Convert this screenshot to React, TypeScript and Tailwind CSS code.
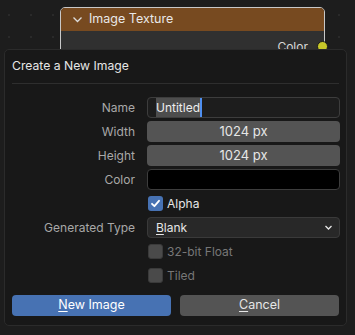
import React from 'react';

const font = { fontFamily: 'Inter, "DejaVu Sans", sans-serif' };

const Check: React.FC<{ on?: boolean; dim?: boolean; label: string }> = ({ on, dim, label }) => (
  <div className="flex items-center h-[21px]">
    <div
      className={`ml-px w-[15px] h-[15px] rounded-[3px] flex items-center justify-center ${
        on ? 'bg-[#4772b3]' : dim ? 'bg-[#4a4a4a] border border-[#3a3a3a]' : 'bg-[#545454]'
      }`}
    >
      {on && (
        <svg width="11" height="11" viewBox="0 0 11 11">
          <path d="M2 5.8 L4.4 8.2 L9 2.8" fill="none" stroke="#ffffff" strokeWidth="1.8" strokeLinecap="round" strokeLinejoin="round" />
        </svg>
      )}
    </div>
    <span className={`ml-[4px] text-[12px] ${dim ? 'text-[#777777]' : 'text-[#e6e6e6]'}`}>{label}</span>
  </div>
);

const Row: React.FC<{ label?: string; children: React.ReactNode }> = ({ label, children }) => (
  <div className="flex items-center h-[21px] mb-[3px]">
    <div className="w-[125px] text-right text-[12px] text-[#a8a8a8] pr-px">{label}</div>
    <div className="ml-[11px] flex-1">{children}</div>
  </div>
);

export default function App() {
  return (
    <div
      className="relative w-[355px] h-[335px] overflow-hidden bg-[#1d1d1d] bg-[radial-gradient(circle,#2a2a2a_1px,transparent_1.2px)] bg-[length:22px_22px] bg-[position:-2px_4px]"
      style={font}
    >
      {/* node */}
      <div className="absolute left-[60px] top-[7px] w-[265px] h-[120px] rounded-[5px] border border-[#c8c8c8] bg-[#303030] overflow-hidden">
        <div className="h-[23px] bg-[#774a20] flex items-center pl-[11px] text-[12.5px] text-[#e8e8e8]">
          <svg width="11" height="11" viewBox="0 0 11 11" className="mr-[6px]">
            <path d="M1.5 3.5 L5.5 7.5 L9.5 3.5" fill="none" stroke="#dcdcdc" strokeWidth="1.3" />
          </svg>
          Image Texture
        </div>
        <div className="flex justify-end pr-[16px] pt-[7px] text-[12px] text-[#d8d8d8]">Color</div>
      </div>
      <div className="absolute left-[317px] top-[41px] w-[11px] h-[11px] rounded-full bg-[#c7c729] border border-[#1a1a1a]" />

      {/* dialog */}
      <div className="absolute left-[4px] top-[49px] w-[343px] h-[277px] rounded-[5px] bg-[#181818] border border-[#2b2b2b] px-[6px]">
        <div className="h-[33px] flex items-center pl-[1px] text-[12.2px] text-[#e6e6e6]">Create a New Image</div>
        <div className="h-px bg-[#2e2e2e] mx-px" />
        <div className="mt-[13px]">
          <Row label="Name">
            <div className="h-[21px] rounded-[4px] border border-[#3d3d3d] bg-[#1d1d1d] flex items-center pl-[8px] text-[12px] text-[#eeeeee]">
              <span className="bg-[#4d4d4d] h-[19px] flex items-center">Untitled</span>
              <span className="w-[2px] h-[19px] bg-[#4f8ff0]" />
            </div>
          </Row>
          <Row label="Width">
            <div className="h-[21px] rounded-[4px] bg-[#545454] flex items-center justify-center text-[13px] text-[#e6e6e6]">1024 px</div>
          </Row>
          <Row label="Height">
            <div className="h-[21px] rounded-[4px] bg-[#545454] flex items-center justify-center text-[13px] text-[#e6e6e6]">1024 px</div>
          </Row>
          <Row label="Color">
            <div className="h-[21px] rounded-[4px] bg-black border border-[#3d3d3d]" />
          </Row>
          <Row>
            <Check on label="Alpha" />
          </Row>
          <Row label="Generated Type">
            <div className="h-[21px] rounded-[4px] bg-[#282828] border border-[#3a3a3a] flex items-center justify-between pl-[8px] pr-[6px] text-[12px] text-[#e6e6e6]">
              <span>
                <span className="underline underline-offset-2">B</span>lank
              </span>
              <svg width="9" height="9" viewBox="0 0 9 9">
                <path d="M1.5 3 L4.5 6 L7.5 3" fill="none" stroke="#e6e6e6" strokeWidth="1.3" />
              </svg>
            </div>
          </Row>
          <Row>
            <Check dim label="32-bit Float" />
          </Row>
          <Row>
            <Check dim label="Tiled" />
          </Row>
        </div>
        <div className="flex gap-[9px] mt-[9px] px-px">
          <div className="w-[159px] h-[21px] rounded-[4px] bg-[#4772b3] flex items-center justify-center text-[12.5px] text-[#ffffff]">
            <span>
              <span className="underline underline-offset-2">N</span>ew Image
            </span>
          </div>
          <div className="flex-1 h-[21px] rounded-[4px] bg-[#545454] flex items-center justify-center text-[12.5px] text-[#e6e6e6]">
            <span>
              <span className="underline underline-offset-2">C</span>ancel
            </span>
          </div>
        </div>
      </div>
    </div>
  );
}
